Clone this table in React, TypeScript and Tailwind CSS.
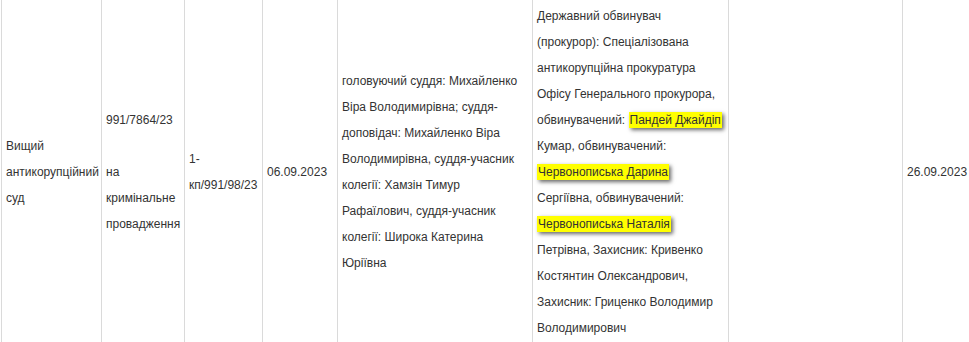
import React from 'react';

const cellBase =
  'flex items-center shrink-0 border-l border-[#dadada] px-[4px] py-[5px] leading-[26px]';

function Mark({ children }: { children: React.ReactNode }) {
  return (
    <span className="bg-[#ffff00] px-[1px] py-[1px] shadow-[2px_2px_4px_rgba(0,0,0,0.6)]">
      {children}
    </span>
  );
}

export default function App() {
  return (
    <div className="w-[969px] h-[342px] overflow-hidden bg-white">
      <div
        className="flex w-[1100px] ml-[1px] -mt-[2px] text-[12px] text-[#333333]"
        style={{ fontFamily: '"Liberation Sans", Arial, sans-serif' }}
      >
        {/* Суд */}
        <div className={`${cellBase} w-[100px]`}>
          <div>Вищий антикорупційний суд</div>
        </div>

        {/* Номер справи */}
        <div className={`${cellBase} w-[83px]`}>
          <div>
            991/7864/23
            <br />
            <br />
            на кримінальне провадження
          </div>
        </div>

        {/* Номер провадження */}
        <div className={`${cellBase} w-[78px]`}>
          <div>1-кп/991/98/23</div>
        </div>

        {/* Дата */}
        <div className={`${cellBase} w-[75px]`}>
          <div>06.09.2023</div>
        </div>

        {/* Склад суду */}
        <div className={`${cellBase} w-[195px]`}>
          <div>
            головуючий суддя: Михайленко Віра Володимирівна; суддя-доповідач: Михайленко Віра
            Володимирівна, суддя-учасник колегії: Хамзін Тимур Рафаїлович, суддя-учасник колегії:
            Широка Катерина Юріївна
          </div>
        </div>

        {/* Учасники */}
        <div className={`${cellBase} w-[196px]`}>
          <div>
            Державний обвинувач (прокурор): Спеціалізована антикорупційна прокуратура Офісу
            Генерального прокурора, обвинувачений: <Mark>Пандей Джайдіп</Mark> Кумар,
            обвинувачений: <Mark>Червонописька Дарина</Mark> Сергіївна, обвинувачений:{' '}
            <Mark>Червонописька Наталія</Mark> Петрівна, Захисник: Кривенко Костянтин
            Олександрович, Захисник: Гриценко Володимир Володимирович
          </div>
        </div>

        {/* Порожня */}
        <div className={`${cellBase} w-[174px]`}>
          <div></div>
        </div>

        {/* Дата засідання */}
        <div className={`${cellBase} w-[190px]`}>
          <div>26.09.2023</div>
        </div>
      </div>
    </div>
  );
}
